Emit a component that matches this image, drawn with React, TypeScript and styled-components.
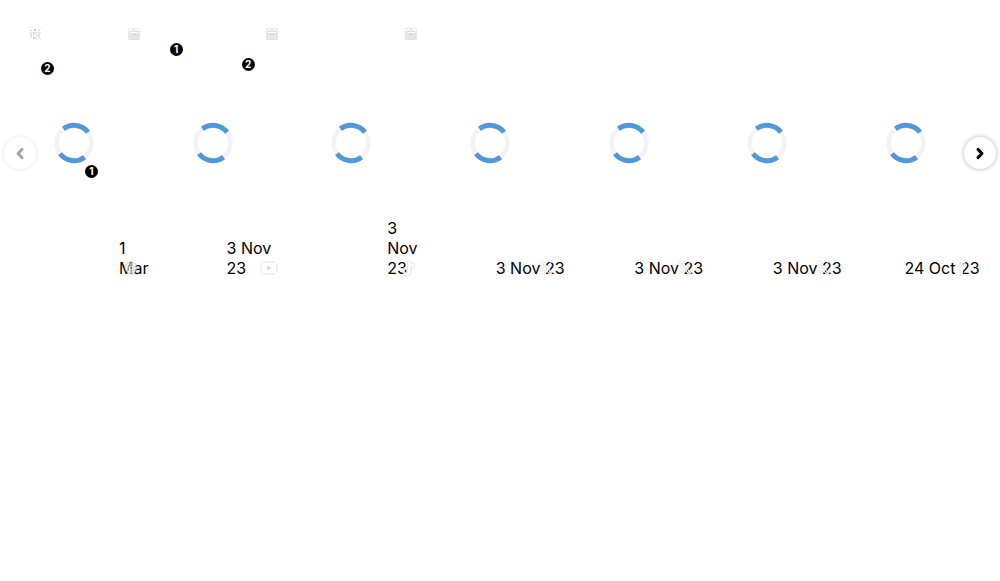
import React from 'react';
import styled, { createGlobalStyle } from 'styled-components';

const GlobalStyle = createGlobalStyle`
  * { box-sizing: border-box; }
  body {
    margin: 0;
    background: #fff;
    color: #000;
    font: 16px/20px Inter, "Liberation Sans", sans-serif;
  }
`;

const Carousel = styled.section`
  position: relative;
  padding: 5px 25px 0 5px;
`;

const Track = styled.ul`
  display: grid;
  grid-template-columns: repeat(7, minmax(0, 1fr));
  margin: 0;
  padding: 0;
  list-style: none;
`;

const Tile = styled.li`
  position: relative;
  display: flex;
  flex-direction: column;
  justify-content: space-between;
  min-height: 276px;
  padding: 22px 4px 3px 24px;
`;

const TileHeader = styled.div`
  display: flex;
  justify-content: space-between;
  height: 14px;
  svg:last-child { margin-left: auto; }
`;

const LoadingLayer = styled.div`
  position: absolute;
  inset: 0;
  display: grid;
  place-items: center;
`;

const DateText = styled.time<{ $indent: number; $width: number }>`
  margin-left: ${(p) => p.$indent}px;
  width: ${(p) => p.$width}px;
  flex: none;
`;

const SourceLink = styled.a`
  position: absolute;
  right: 4px;
  bottom: 4px;
  display: flex;
  color: #fff;
  filter: drop-shadow(0 0 1px rgba(0, 0, 0, 0.3));
  opacity: 0.85;
`;

const Hotspot = styled.button<{ $x: number; $y: number }>`
  position: absolute;
  left: ${(p) => p.$x}px;
  top: ${(p) => p.$y}px;
  width: 13px;
  height: 13px;
  padding: 0;
  border: 0;
  border-radius: 50%;
  background: #000;
  color: #fff;
  font: 700 10px/13px Inter, "Liberation Sans", sans-serif;
  text-align: center;
`;

const Arrow = styled.button<{ $side: 'left' | 'right' }>`
  position: absolute;
  top: 137px;
  ${(p) => p.$side}: 4px;
  display: grid;
  place-items: center;
  width: 32px;
  height: 32px;
  padding: 0;
  border: 0;
  border-radius: 50%;
  background: #fff;
  color: #000;
  box-shadow: 0 0 5px rgba(0, 0, 0, 0.3);
  &:disabled { opacity: 0.35; }
`;

const Spinner = () => (
  <svg width="42" height="42" viewBox="-21 -21 42 42" fill="none" role="img" aria-label="Loading">
    <circle r="17.4" stroke="#f3f3f3" strokeWidth="4.6" />
    <g stroke="#5298d8" strokeWidth="5">
      <path d="M-10.6-14.2A17.7 17.7 0 0 1 14-10.8" />
      <path d="M10.6 14.2A17.7 17.7 0 0 1-14 10.8" />
    </g>
  </svg>
);

const ReelIcon = () => (
  <svg width="12" height="14" viewBox="0 0 12 14" aria-hidden="true">
    <path d="M0 1h1v1H0zM11 1h1v1h-1zM0 12h1v1H0zM11 12h1v1h-1z" fill="#e2e2e2" />
    <path d="M1 3h2v1H1zM5 2h2v2H5zM9 3h2v1H9z" fill="#d0d0d0" />
    <path d="M0 5h12v1H0zM1 6h2v5H1zM9 6h2v5H9zM3 11h6v1H3z" fill="#e6e6e6" />
    <path d="M4 6h1v5H4zM5 6h2v1H5zM7 7h1v1H7zM8 8h1v1H8zM7 9h1v1H7zM5 10h2v1H5z" fill="#dadada" />
  </svg>
);

const BagIcon = () => (
  <svg width="12" height="14" viewBox="0 0 12 14" fill="none" aria-hidden="true">
    <path d="M.5 13V1.5h11V13" stroke="#ebebeb" />
    <path d="M2 6h8v6H2z" fill="#e6e6e6" />
    <path d="M1.5 12.5v-8h9v8z" stroke="#e0e0e0" />
    <path d="M3.5 4.5V3.5h1m3 0h1v1M5 2.5h2" stroke="#d4d4d4" />
    <path d="M2 5.5h8" stroke="#fff" />
    <path d="M4 6.5c.6 1.6 3.4 1.6 4 0" stroke="#cfcfcf" />
  </svg>
);

const Chevron = ({ flip = false }: { flip?: boolean }) => (
  <svg width="10" height="13" viewBox="0 0 10 13" fill="none" stroke="currentColor" strokeWidth="3" strokeLinecap="round" strokeLinejoin="round" aria-hidden="true">
    <path d={flip ? 'M7 2.4L3 6.5l4 4.1' : 'M3 2.4l4 4.1-4 4.1'} />
  </svg>
);

type Source = 'instagram' | 'youtube' | 'tiktok' | 'x' | 'facebook';

const SourceIcon = ({ name }: { name: Source }) => (
  <svg width="18" height="18" viewBox="0 0 18 18" fill="none" aria-hidden="true">
    {name === 'instagram' && (
      <>
        <circle cx="9" cy="9" r="6.5" fill="#ddd" fillOpacity=".5" />
        <g stroke="currentColor" strokeWidth="1.1">
          <rect x="5" y="5" width="8" height="8" rx="2.4" />
          <circle cx="9" cy="9" r="2" />
        </g>
      </>
    )}
    {name === 'youtube' && (
      <>
        <rect x="1.5" y="3.5" width="15" height="11" rx="3" fill="currentColor" />
        <path d="M7.3 6.8v4.4L11.2 9z" fill="#c4c4c4" />
      </>
    )}
    {name === 'tiktok' && (
      <path d="M9 2h2.7c.2 2 1.4 3.2 3.3 3.4v2.9c-1.3 0-2.3-.4-3.2-1v4.9a4.3 4.3 0 1 1-3.9-4.3v2.8a1.6 1.6 0 1 0 1.1 1.5z" fill="currentColor" />
    )}
    {name === 'x' && (
      <path d="M3 3h4l3 4.2L13.5 3H15l-4.3 5.1L15.5 15h-4l-3.3-4.6L4.3 15H2.8l4.7-5.6zm2.1 1.2 7 9.6h1.3l-7-9.6z" fill="currentColor" />
    )}
    {name === 'facebook' && (
      <path d="M7.5 16V9.8h-2V7.2h2V5.3C7.5 3.2 8.7 2 10.7 2h1.8v2.4h-1.3c-.8 0-1.1.4-1.1 1.1v1.7h2.3l-.4 2.6h-1.9V16z" fill="currentColor" />
    )}
  </svg>
);

interface Post {
  date: string;
  source: Source;
  indent: number;
  width: number;
  reel?: boolean;
  shop?: boolean;
  spots?: { n: number; x: number; y: number }[];
}

const posts: Post[] = [
  { date: '1 Mar', source: 'instagram', indent: 90, width: 32, reel: true, shop: true, spots: [{ n: 2, x: 36, y: 57 }, { n: 1, x: 80, y: 160 }] },
  { date: '3 Nov 23', source: 'youtube', indent: 59, width: 48, shop: true, spots: [{ n: 1, x: 26, y: 38 }, { n: 2, x: 98, y: 53 }] },
  { date: '3 Nov 23', source: 'tiktok', indent: 81, width: 32, shop: true },
  { date: '3 Nov 23', source: 'x', indent: 51, width: 80 },
  { date: '3 Nov 23', source: 'x', indent: 51, width: 80 },
  { date: '3 Nov 23', source: 'x', indent: 51, width: 80 },
  { date: '24 Oct 23', source: 'facebook', indent: 44, width: 88 },
];

export default function App() {
  return (
    <>
      <GlobalStyle />
      <Carousel aria-label="Social posts">
        <Track>
          {posts.map((post, i) => (
            <Tile key={i}>
              <TileHeader>
                {post.reel && <ReelIcon />}
                {post.shop && <BagIcon />}
              </TileHeader>
              <LoadingLayer><Spinner /></LoadingLayer>
              <DateText $indent={post.indent} $width={post.width}>{post.date}</DateText>
              <SourceLink href="#" aria-label={post.source}><SourceIcon name={post.source} /></SourceLink>
              {post.spots?.map((s) => (
                <Hotspot key={s.n} type="button" $x={s.x} $y={s.y}>{s.n}</Hotspot>
              ))}
            </Tile>
          ))}
        </Track>
        <Arrow type="button" $side="left" aria-label="Previous" disabled><Chevron flip /></Arrow>
        <Arrow type="button" $side="right" aria-label="Next"><Chevron /></Arrow>
      </Carousel>
    </>
  );
}
